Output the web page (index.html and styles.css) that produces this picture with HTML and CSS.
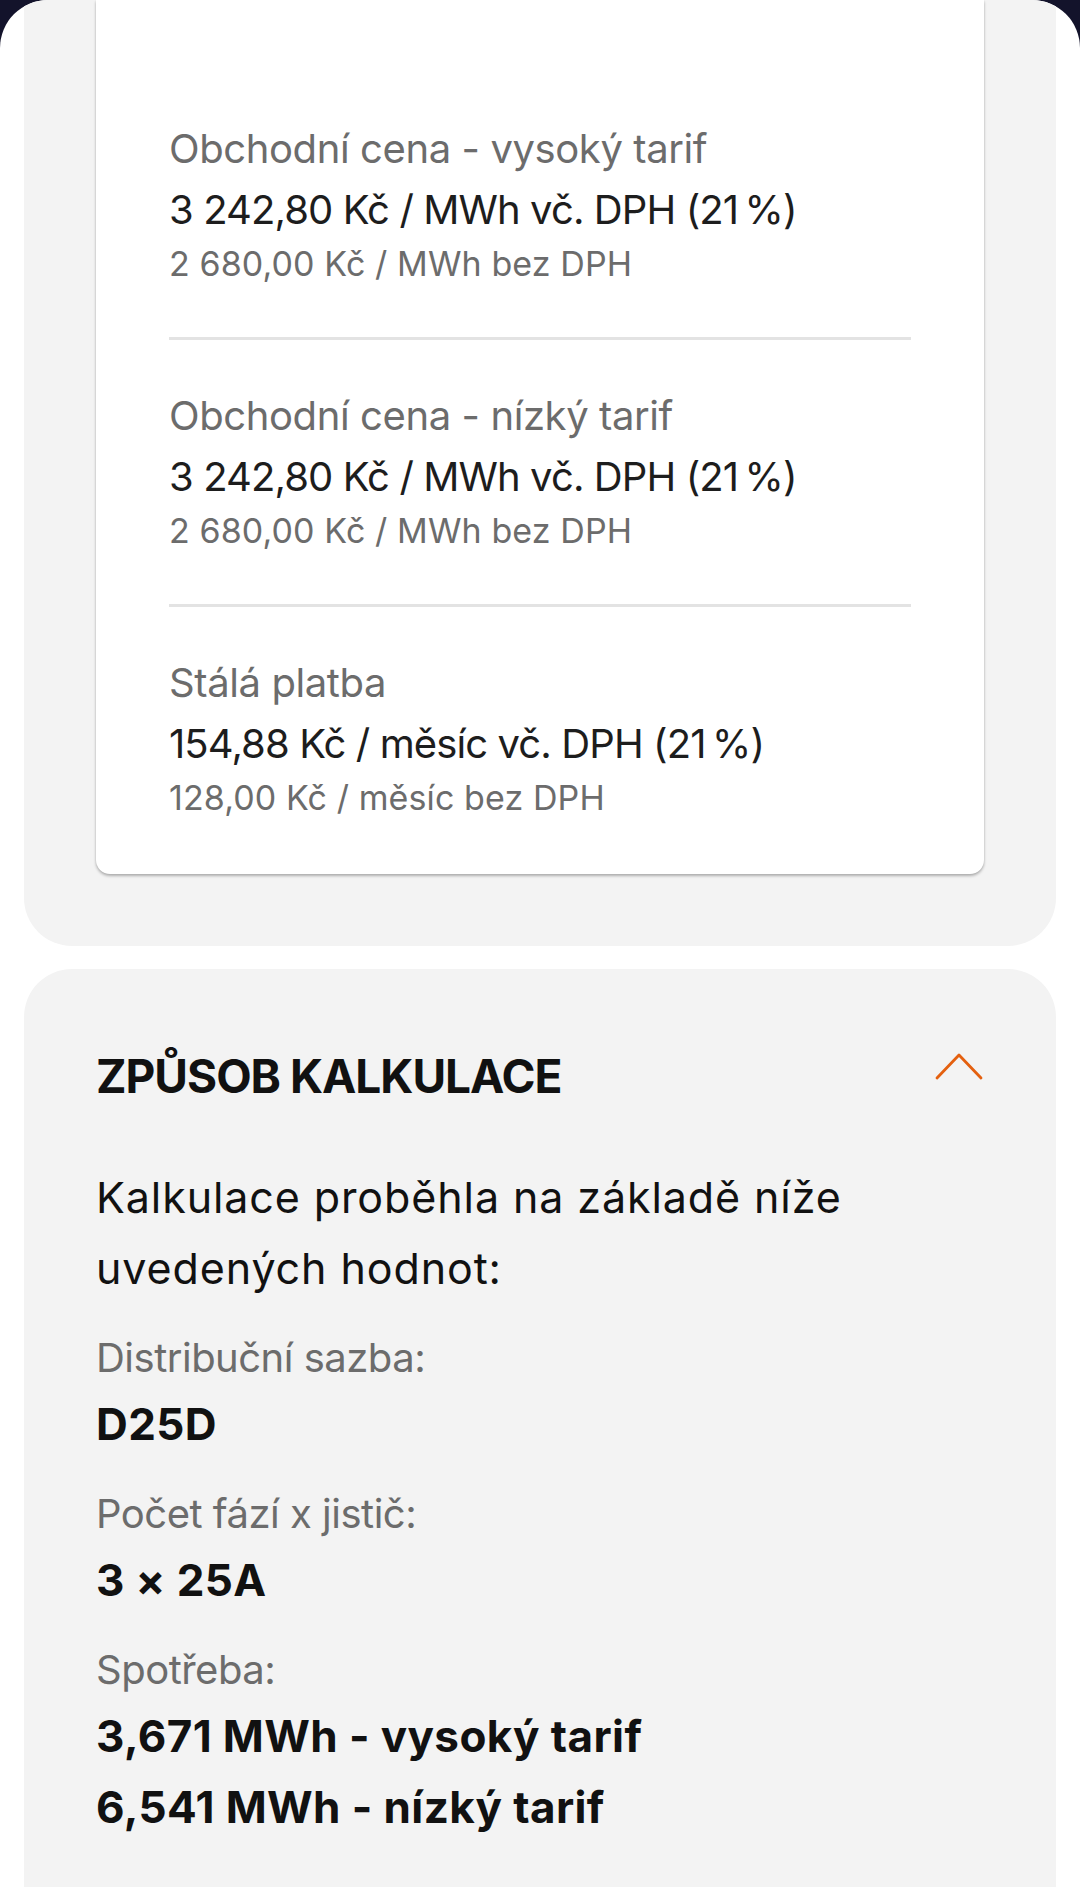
FILE: index.html
```html
<!DOCTYPE html>
<html lang="cs">
<head>
<meta charset="utf-8">
<title>Ceník</title>
<link rel="stylesheet" href="styles.css">
</head>
<body>
<div class="sheet">
  <section class="panel panel-prices">
    <div class="card">
      <div class="item">
        <div class="item-label">Obchodní cena - vysoký tarif</div>
        <div class="item-value">3 242,80 Kč / MWh vč. DPH (21&#8239;%)</div>
        <div class="item-sub">2 680,00 Kč / MWh bez DPH</div>
      </div>
      <div class="item">
        <div class="item-label">Obchodní cena - nízký tarif</div>
        <div class="item-value">3 242,80 Kč / MWh vč. DPH (21&#8239;%)</div>
        <div class="item-sub">2 680,00 Kč / MWh bez DPH</div>
      </div>
      <div class="item">
        <div class="item-label">Stálá platba</div>
        <div class="item-value">154,88 Kč / měsíc vč. DPH (21&#8239;%)</div>
        <div class="item-sub">128,00 Kč / měsíc bez DPH</div>
      </div>
    </div>
  </section>

  <section class="panel panel-calc">
    <div class="calc-header">
      <h2 class="calc-title">ZPŮSOB KALKULACE</h2>
      <svg class="chevron" width="48" height="28" viewBox="0 0 48 28" aria-hidden="true">
        <polyline points="2,26 24,3 46,26" fill="none" stroke="#e4600f" stroke-width="2.8" stroke-linecap="round" stroke-linejoin="round"/>
      </svg>
    </div>
    <p class="calc-intro">Kalkulace proběhla na základě níže uvedených hodnot:</p>
    <div class="field">
      <div class="field-label">Distribuční sazba:</div>
      <div class="field-value">D25D</div>
    </div>
    <div class="field">
      <div class="field-label">Počet fází x jistič:</div>
      <div class="field-value">3 × 25A</div>
    </div>
    <div class="field">
      <div class="field-label">Spotřeba:</div>
      <div class="field-value">3,671 MWh - vysoký tarif</div>
      <div class="field-value">6,541 MWh - nízký tarif</div>
    </div>
  </section>
</div>
</body>
</html>
```

FILE: styles.css
```css
* { box-sizing: border-box; }

html, body {
  margin: 0;
  padding: 0;
}

body {
  background: #13132b;
  font-family: Inter, "Liberation Sans", Arial, sans-serif;
  color: #1d1d1d;
}

.sheet {
  background: #ffffff;
  border-radius: 48px 48px 0 0;
  overflow: hidden;
  min-height: 1887px;
  padding: 0 24px;
}

.panel {
  background: #f3f3f3;
}

.panel-prices {
  border-radius: 0 0 48px 48px;
  padding: 0 72px 72px;
}

.card {
  background: #ffffff;
  border-radius: 0 0 14px 14px;
  box-shadow: 0 2px 3px rgba(0, 0, 0, 0.28), 0 0 2px rgba(0, 0, 0, 0.08);
  padding: 73px 73px 3px;
}

.item {
  padding: 45px 0 50px;
  border-bottom: 3px solid #e3e3e3;
}

.item:last-child {
  border-bottom: none;
}

.item-label {
  font-size: 40px;
  line-height: 62px;
  color: #6c6c6c;
  letter-spacing: -0.4px;
}

.item-value {
  font-size: 40px;
  line-height: 60px;
  color: #1d1d1d;
  letter-spacing: -0.9px;
}

.item-sub {
  font-size: 34px;
  line-height: 47px;
  color: #6c6c6c;
  letter-spacing: 0.1px;
}

.panel-calc {
  margin-top: 23px;
  border-radius: 48px 48px 0 0;
  padding: 79px 72px 60px;
  min-height: 919px;
}

.calc-header {
  display: flex;
  justify-content: space-between;
  align-items: flex-start;
}

.calc-title {
  margin: 0;
  font-size: 46px;
  line-height: 56px;
  font-weight: 700;
  color: #111111;
  letter-spacing: -1px;
}

.chevron {
  display: block;
  margin-top: 4px;
  margin-right: 1px;
}

.calc-intro {
  margin: 58px 0 0;
  font-size: 43px;
  line-height: 71px;
  color: #111111;
  letter-spacing: 0.9px;
}

.field {
  margin-top: 23px;
}

.field-label {
  font-size: 40px;
  line-height: 62px;
  color: #6c6c6c;
  letter-spacing: -0.5px;
}

.field-value {
  font-size: 44px;
  line-height: 71px;
  font-weight: 700;
  color: #111111;
  letter-spacing: 0.4px;
}
```
